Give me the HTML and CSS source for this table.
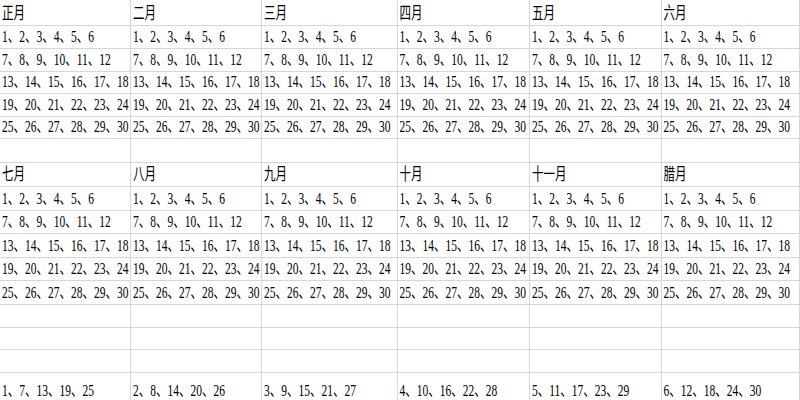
FILE: index.html
```html
<!DOCTYPE html>
<html lang="zh">
<head>
<meta charset="utf-8">
<title>月份表</title>
<link rel="stylesheet" href="styles.css">
</head>
<body>
<div class="sheet">
  <div class="c"><span>正月</span></div><div class="c"><span>二月</span></div><div class="c"><span>三月</span></div><div class="c"><span>四月</span></div><div class="c"><span>五月</span></div><div class="c"><span>六月</span></div>
  <div class="c"><span>1、2、3、4、5、6</span></div><div class="c"><span>1、2、3、4、5、6</span></div><div class="c"><span>1、2、3、4、5、6</span></div><div class="c"><span>1、2、3、4、5、6</span></div><div class="c"><span>1、2、3、4、5、6</span></div><div class="c"><span>1、2、3、4、5、6</span></div>
  <div class="c"><span>7、8、9、10、11、12</span></div><div class="c"><span>7、8、9、10、11、12</span></div><div class="c"><span>7、8、9、10、11、12</span></div><div class="c"><span>7、8、9、10、11、12</span></div><div class="c"><span>7、8、9、10、11、12</span></div><div class="c"><span>7、8、9、10、11、12</span></div>
  <div class="c"><span>13、14、15、16、17、18</span></div><div class="c"><span>13、14、15、16、17、18</span></div><div class="c"><span>13、14、15、16、17、18</span></div><div class="c"><span>13、14、15、16、17、18</span></div><div class="c"><span>13、14、15、16、17、18</span></div><div class="c"><span>13、14、15、16、17、18</span></div>
  <div class="c"><span>19、20、21、22、23、24</span></div><div class="c"><span>19、20、21、22、23、24</span></div><div class="c"><span>19、20、21、22、23、24</span></div><div class="c"><span>19、20、21、22、23、24</span></div><div class="c"><span>19、20、21、22、23、24</span></div><div class="c"><span>19、20、21、22、23、24</span></div>
  <div class="c"><span>25、26、27、28、29、30</span></div><div class="c"><span>25、26、27、28、29、30</span></div><div class="c"><span>25、26、27、28、29、30</span></div><div class="c"><span>25、26、27、28、29、30</span></div><div class="c"><span>25、26、27、28、29、30</span></div><div class="c"><span>25、26、27、28、29、30</span></div>
  <div class="c"></div><div class="c"></div><div class="c"></div><div class="c"></div><div class="c"></div><div class="c"></div>
  <div class="c"><span>七月</span></div><div class="c"><span>八月</span></div><div class="c"><span>九月</span></div><div class="c"><span>十月</span></div><div class="c"><span>十一月</span></div><div class="c"><span>腊月</span></div>
  <div class="c"><span>1、2、3、4、5、6</span></div><div class="c"><span>1、2、3、4、5、6</span></div><div class="c"><span>1、2、3、4、5、6</span></div><div class="c"><span>1、2、3、4、5、6</span></div><div class="c"><span>1、2、3、4、5、6</span></div><div class="c"><span>1、2、3、4、5、6</span></div>
  <div class="c"><span>7、8、9、10、11、12</span></div><div class="c"><span>7、8、9、10、11、12</span></div><div class="c"><span>7、8、9、10、11、12</span></div><div class="c"><span>7、8、9、10、11、12</span></div><div class="c"><span>7、8、9、10、11、12</span></div><div class="c"><span>7、8、9、10、11、12</span></div>
  <div class="c"><span>13、14、15、16、17、18</span></div><div class="c"><span>13、14、15、16、17、18</span></div><div class="c"><span>13、14、15、16、17、18</span></div><div class="c"><span>13、14、15、16、17、18</span></div><div class="c"><span>13、14、15、16、17、18</span></div><div class="c"><span>13、14、15、16、17、18</span></div>
  <div class="c"><span>19、20、21、22、23、24</span></div><div class="c"><span>19、20、21、22、23、24</span></div><div class="c"><span>19、20、21、22、23、24</span></div><div class="c"><span>19、20、21、22、23、24</span></div><div class="c"><span>19、20、21、22、23、24</span></div><div class="c"><span>19、20、21、22、23、24</span></div>
  <div class="c"><span>25、26、27、28、29、30</span></div><div class="c"><span>25、26、27、28、29、30</span></div><div class="c"><span>25、26、27、28、29、30</span></div><div class="c"><span>25、26、27、28、29、30</span></div><div class="c"><span>25、26、27、28、29、30</span></div><div class="c"><span>25、26、27、28、29、30</span></div>
  <div class="c"></div><div class="c"></div><div class="c"></div><div class="c"></div><div class="c"></div><div class="c"></div>
  <div class="c"></div><div class="c"></div><div class="c"></div><div class="c"></div><div class="c"></div><div class="c"></div>
  <div class="c"></div><div class="c"></div><div class="c"></div><div class="c"></div><div class="c"></div><div class="c"></div>
  <div class="c"><span>1、7、13、19、25</span></div><div class="c"><span>2、8、14、20、26</span></div><div class="c"><span>3、9、15、21、27</span></div><div class="c"><span>4、10、16、22、28</span></div><div class="c"><span>5、11、17、23、29</span></div><div class="c"><span>6、12、18、24、30</span></div>
</div>
</body>
</html>
```
FILE: styles.css
```css
html, body {
  margin: 0;
  padding: 0;
  background: #ffffff;
}
body {
  width: 800px;
  height: 400px;
  overflow: hidden;
}
.sheet {
  display: grid;
  grid-template-columns: 131px 131px 135.5px 132.5px 131.5px 138.5px;
  grid-template-rows: 26px 23px 23px 22px 23px 22px 24px 24px 23.5px 23.5px 23.5px 23.5px 23.5px 23px 22px 23px 30px;
  border-top: 1px solid #d6d6d6;
  margin-top: -1px;
  font-family: "Liberation Serif", "Noto Sans CJK SC", serif;
  font-size: 11.5px;
  color: #000000;
}
.c {
  box-sizing: border-box;
  border-right: 1px solid #d6d6d6;
  border-bottom: 1px solid #d6d6d6;
  display: flex;
  align-items: flex-end;
  padding: 0 0 3px 2px;
  overflow: hidden;
  white-space: nowrap;
}
.c span {
  display: inline-block;
  line-height: 11px;
  transform: scaleY(1.45);
  transform-origin: left bottom;
}
```
